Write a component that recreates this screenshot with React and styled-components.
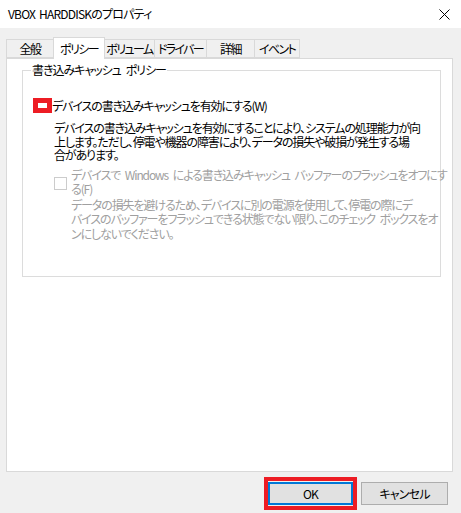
import React from 'react'
import styled, { createGlobalStyle } from 'styled-components'

const GlobalStyle = createGlobalStyle`
  html, body {
    margin: 0;
    padding: 0;
    background: #f0f0f0;
  }
  body {
    font-family: "Noto Sans CJK JP", "Liberation Sans", sans-serif;
    font-size: 12px;
    color: #000;
    font-feature-settings: "palt";
  }
`

const tabs = [
  { label: '全般', width: 48 },
  { label: 'ポリシー', width: 52, active: true },
  { label: 'ボリューム', width: 51 },
  { label: 'ドライバー', width: 53 },
  { label: '詳細', width: 49 },
  { label: 'イベント', width: 46 },
]

const Window = styled.div`
  width: 461px;
  height: 513px;
  display: flex;
  flex-direction: column;
  background: #f0f0f0;
  overflow: hidden;
`

const TitleBar = styled.div`
  height: 28px;
  background: #fff;
  display: flex;
  align-items: center;
  justify-content: space-between;
  padding: 0 8px;
  box-sizing: border-box;
`

const Title = styled.span`
  font-size: 12px;
  line-height: 16px;
  letter-spacing: -0.8px;
  word-spacing: 2px;
`

const CloseButton = styled.svg`
  width: 11px;
  height: 11px;
  margin-right: 3px;
`

const Body = styled.div`
  display: flex;
  flex-direction: column;
  padding: 9px 8px 0 6px;
`

const TabRow = styled.div`
  display: flex;
  align-items: flex-end;
  height: 21px;
  position: relative;
  z-index: 1;
`

const Tab = styled.div`
  box-sizing: border-box;
  width: ${(p) => p.$width}px;
  height: ${(p) => (p.$active ? 22 : 19)}px;
  margin-bottom: ${(p) => (p.$active ? -1 : 0)}px;
  background: ${(p) => (p.$active ? '#fff' : '#f0f0f0')};
  border: 1px solid #d9d9d9;
  border-bottom: ${(p) => (p.$active ? 'none' : '1px solid #d9d9d9')};
  margin-left: ${(p) => (p.$first ? 0 : -1)}px;
  display: flex;
  align-items: center;
  justify-content: center;
  padding-top: ${(p) => (p.$active ? 0 : 1)}px;
  line-height: 16px;
  letter-spacing: -1.6px;
  white-space: nowrap;
`

const Panel = styled.div`
  box-sizing: border-box;
  height: 414px;
  background: #fff;
  border: 1px solid #d9d9d9;
  padding: 3px 11px 0 15px;
`

const Group = styled.fieldset`
  margin: 0;
  padding: 0 0 0 10px;
  height: 215px;
  box-sizing: border-box;
  border: 1px solid #dcdcdc;
  min-width: 0;
`

const Legend = styled.legend`
  padding: 0 1px;
  margin-left: -2px;
  line-height: 16px;
  letter-spacing: -1px;
  word-spacing: 3px;
`

const CheckRow = styled.div`
  display: flex;
  align-items: flex-start;
  margin-top: ${(p) => p.$top}px;
  margin-left: ${(p) => p.$left || 0}px;
  color: ${(p) => (p.$disabled ? '#a0a0a0' : '#000')};
  line-height: 14px;
  letter-spacing: -1.1px;
  word-spacing: 3px;
  white-space: nowrap;
`

const MarkedBox = styled.div`
  width: 19px;
  height: 15px;
  background: #ed1c24;
  display: flex;
  align-items: center;
  justify-content: center;
  flex-shrink: 0;

  &::after {
    content: '';
    width: 9px;
    height: 5px;
    background: #fff;
  }
`

const Box = styled.div`
  width: 13px;
  height: 13px;
  box-sizing: border-box;
  border: 1px solid #cccccc;
  background: #fff;
  margin: 9px 4px 0 0;
  flex-shrink: 0;
`

const Label = styled.div`
  line-height: ${(p) => p.$lh || 14}px;
`

const Desc = styled.div`
  margin: ${(p) => p.$mt}px 0 0 ${(p) => p.$ml}px;
  line-height: ${(p) => p.$lh}px;
  color: ${(p) => (p.$disabled ? '#a0a0a0' : '#000')};
  letter-spacing: -1.1px;
  word-spacing: 3px;
  white-space: nowrap;
`

const Footer = styled.div`
  display: flex;
  justify-content: flex-end;
  align-items: center;
  gap: 4px;
  padding: 5px 5px 0 0;
`

const Highlight = styled.div`
  border: 4px solid #ed1c24;
  padding: 1px 0;
  display: flex;
`

const Button = styled.button`
  box-sizing: border-box;
  width: ${(p) => p.$width}px;
  height: ${(p) => p.$height}px;
  background: #e1e1e1;
  border: ${(p) => (p.$default ? '2px solid #0078d7' : '1px solid #adadad')};
  font-family: "Noto Sans CJK JP", "Liberation Sans", sans-serif;
  font-size: 12px;
  font-feature-settings: "palt";
  letter-spacing: -0.8px;
  color: #000;
  padding: 0;
  line-height: 16px;
`

export default function App() {
  return (
    <>
      <GlobalStyle />
      <Window>
        <TitleBar>
          <Title>VBOX HARDDISKのプロパティ</Title>
          <CloseButton viewBox="0 0 11 11">
            <path d="M0.5 0.5 L10.5 10.5 M10.5 0.5 L0.5 10.5" stroke="#000" strokeWidth="1" />
          </CloseButton>
        </TitleBar>
        <Body>
          <TabRow>
            {tabs.map((t, i) => (
              <Tab key={t.label} $width={t.width} $active={t.active} $first={i === 0}>
                {t.label}
              </Tab>
            ))}
          </TabRow>
          <Panel>
            <Group>
              <Legend>書き込みキャッシュ ポリシー</Legend>
              <CheckRow $top={20}>
                <MarkedBox />
                <Label $lh={16}>デバイスの書き込みキャッシュを有効にする(W)</Label>
              </CheckRow>
              <Desc $mt={7} $ml={21} $lh={13.5}>
                デバイスの書き込みキャッシュを有効にすることにより、システムの処理能力が向
                <br />
                上します。ただし、停電や機器の障害により、データの損失や破損が発生する場
                <br />
                合があります。
              </Desc>
              <CheckRow $top={6} $left={21} $disabled>
                <Box />
                <Label>
                  デバイスで Windows による書き込みキャッシュ バッファーのフラッシュをオフにす
                  <br />
                  る(F)
                </Label>
              </CheckRow>
              <Desc $mt={2} $ml={38} $lh={14.5} $disabled>
                データの損失を避けるため、デバイスに別の電源を使用して、停電の際にデ
                <br />
                バイスのバッファーをフラッシュできる状態でない限り、このチェック ボックスをオ
                <br />
                ンにしないでください。
              </Desc>
            </Group>
          </Panel>
          <Footer>
            <Highlight>
              <Button $default $width={85} $height={23}>
                OK
              </Button>
            </Highlight>
            <Button $width={87} $height={23}>
              キャンセル
            </Button>
          </Footer>
        </Body>
      </Window>
    </>
  )
}
